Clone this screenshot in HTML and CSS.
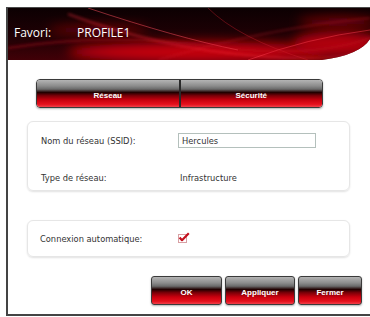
FILE: index.html
```html
<!DOCTYPE html>
<html>
<head>
<meta charset="utf-8">
<link rel="stylesheet" href="styles.css">
</head>
<body>
<div class="window">
  <div class="header">
    <svg class="header-art" width="362" height="53" viewBox="0 0 362 53">
      <defs>
        <clipPath id="hclip"><path d="M0 0 H362 V31 Q352 47 314 52 H0 Z"/></clipPath>
        <linearGradient id="hbase" x1="0" y1="0" x2="0" y2="1">
          <stop offset="0" stop-color="#0c0002"/>
          <stop offset="0.6" stop-color="#220105"/>
          <stop offset="1" stop-color="#420007"/>
        </linearGradient>
        <filter id="blur6" x="-20%" y="-100%" width="140%" height="300%"><feGaussianBlur stdDeviation="6"/></filter>
        <filter id="blur2" x="-20%" y="-100%" width="140%" height="300%"><feGaussianBlur stdDeviation="1.5"/></filter>
      </defs>
      <g clip-path="url(#hclip)">
        <rect width="362" height="53" fill="url(#hbase)"/>
        <ellipse cx="190" cy="44" rx="130" ry="10" fill="#c8000f" filter="url(#blur6)"/>
        <ellipse cx="330" cy="36" rx="45" ry="13" fill="#b0000c" filter="url(#blur6)"/>
        <ellipse cx="90" cy="22" rx="50" ry="5" fill="#70000a" filter="url(#blur6)"/>
        <ellipse cx="330" cy="14" rx="40" ry="5" fill="#80000a" filter="url(#blur6)"/>
        <path d="M60 6 Q150 40 250 48 T362 36" stroke="#ff3040" stroke-width="1.4" fill="none" opacity="0.6" filter="url(#blur2)"/>
        <path d="M80 0 Q170 30 230 42" stroke="#ff5060" stroke-width="1" fill="none" opacity="0.5"/>
        <path d="M150 52 Q260 20 362 10" stroke="#e02030" stroke-width="1.2" fill="none" opacity="0.55" filter="url(#blur2)"/>
        <path d="M240 52 Q300 30 362 22" stroke="#ff4050" stroke-width="0.8" fill="none" opacity="0.6"/>
        <path d="M0 40 Q100 24 200 38 T362 30" stroke="#c01020" stroke-width="2" fill="none" opacity="0.5" filter="url(#blur2)"/>
        <path d="M200 0 Q230 30 300 52" stroke="#d02030" stroke-width="0.8" fill="none" opacity="0.5"/>
      </g>
    </svg>
    <span class="title-label">Favori:</span>
    <span class="title-value">PROFILE1</span>
  </div>

  <div class="content">
    <div class="tabs">
      <div class="tab">Réseau</div>
      <div class="tab">Sécurité</div>
    </div>

    <div class="panel panel-main">
      <div class="label">Nom du réseau (SSID):</div>
      <div class="input">Hercules</div>
      <div class="label">Type de réseau:</div>
      <div class="value">Infrastructure</div>
    </div>

    <div class="panel panel-auto">
      <div class="label">Connexion automatique:</div>
      <svg class="check" width="12" height="11" viewBox="0 0 12 11">
        <rect x="0.5" y="2.5" width="8" height="8" fill="#fff" stroke="#d8a0a4"/>
        <path d="M1.6 5.6 L4 8.2 L10.8 1.2" stroke="#c4101e" stroke-width="2.2" fill="none" stroke-linejoin="round"/>
      </svg>
    </div>

    <div class="actions">
      <div class="btn btn-ok">OK</div>
      <div class="btn btn-apply">Appliquer</div>
      <div class="btn btn-close">Fermer</div>
    </div>
  </div>
</div>
</body>
</html>
```
FILE: styles.css
```css
html, body {
  margin: 0;
  padding: 0;
  background: #ffffff;
}
body {
  width: 370px;
  height: 317px;
  overflow: hidden;
  font-family: "DejaVu Sans", Verdana, sans-serif;
}
.window {
  margin: 7px 0 0 6px;
  height: 306px;
  border-top: 1px solid #4a4a4a;
  border-left: 2px solid #444;
  border-bottom: 2px solid #444;
  background: #fff;
}
.header {
  position: relative;
  height: 53px;
  display: flex;
  align-items: center;
  padding-bottom: 4px;
  box-sizing: border-box;
}
.header-art {
  position: absolute;
  left: 0;
  top: 0;
}
.title-label, .title-value {
  position: relative;
  color: #fff;
  font-family: "Open Sans", "Noto Sans", sans-serif;
  font-size: 12px;
}
.title-label {
  margin-left: 6px;
  width: 63px;
}
.content {
  display: flex;
  flex-direction: column;
}
.tabs {
  display: flex;
  margin: 18px 0 0 28px;
  width: 287px;
  height: 29px;
  border: 1px solid #3a3a3a;
  border-radius: 4px;
  box-sizing: border-box;
  overflow: hidden;
  box-shadow: 0 1px 2px rgba(0,0,0,0.3);
}
.tab, .btn {
  display: flex;
  align-items: center;
  justify-content: center;
  color: #fff;
  font-family: "Liberation Sans", Arial, sans-serif;
  font-weight: bold;
  font-size: 8px;
  background: linear-gradient(to bottom, #b4b4b4 0%, #8c8c8c 22%, #6a6a6a 34%, #200000 46%, #7a0008 58%, #c8000e 74%, #e5101c 90%, #f0404a 100%);
}
.tab {
  flex: 1;
  padding-top: 4px;
}
.tab + .tab {
  border-left: 2px solid #2a2a2a;
}
.panel {
  margin-left: 19px;
  width: 323px;
  border: 1px solid #e6e6e6;
  border-radius: 6px;
  box-shadow: 0 1px 2px rgba(0,0,0,0.12);
  box-sizing: border-box;
  font-size: 8.3px;
  color: #333;
}
.panel-main {
  margin-top: 13px;
  height: 70px;
  display: grid;
  grid-template-columns: 137px 138px;
  grid-template-rows: 15px 15px;
  row-gap: 22px;
  align-items: center;
  padding: 11px 0 0 13px;
}
.input {
  height: 15px;
  border: 1px solid #b4c0bc;
  box-sizing: border-box;
  display: flex;
  align-items: center;
  padding-left: 3px;
  color: #333;
}
.value {
  padding-left: 2px;
}
.panel-auto {
  margin-top: 29px;
  height: 37px;
  display: flex;
  align-items: center;
  padding-left: 12px;
}
.panel-auto .label {
  width: 138px;
}
.check {
  margin-top: -3px;
}
.actions {
  display: flex;
  justify-content: flex-end;
  gap: 3px;
  margin: 19px 3px 0 0;
  width: 354px;
}
.btn {
  height: 29px;
  border: 1px solid #3a3a3a;
  border-radius: 3px;
  box-sizing: border-box;
  padding-top: 4px;
  box-shadow: 0 1px 2px rgba(0,0,0,0.3);
}
.btn-ok { width: 71px; }
.btn-apply { width: 70px; }
.btn-close { width: 64px; }
```
